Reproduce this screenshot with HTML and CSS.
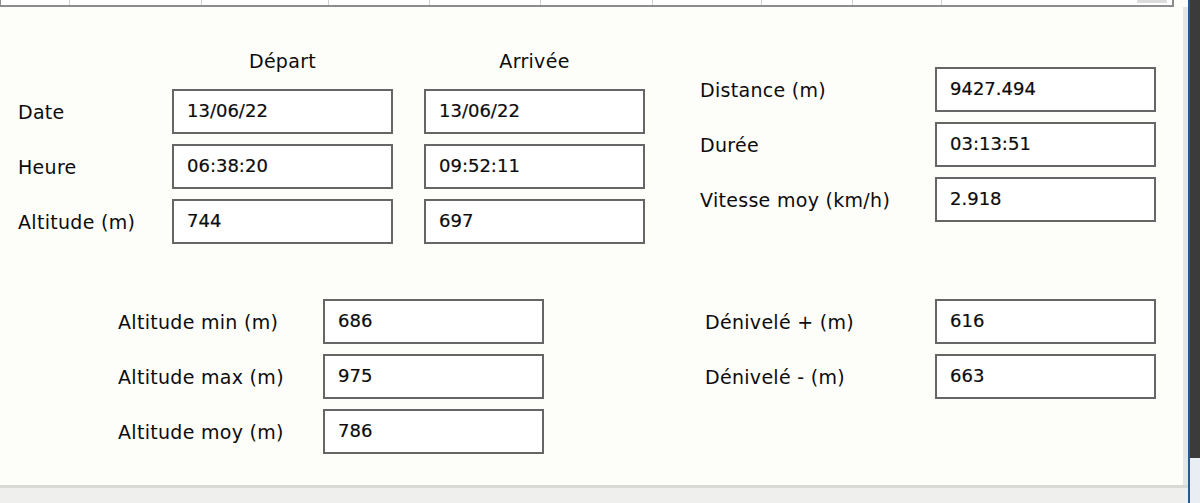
FILE: index.html
```
<!DOCTYPE html>
<html lang="fr">

<head>
    <meta charset="UTF-8">
    <title>Résumé de la trace</title>
    <link rel="stylesheet" href="styles.css">
</head>

<body>
    <div class="screen">
        <div class="window">
            <!-- Bottom edge of the points grid -->
            <div class="grid-strip">
                <div class="grid-col w69"></div>
                <div class="grid-col w132"></div>
                <div class="grid-col w127"></div>
                <div class="grid-col w101"></div>
                <div class="grid-col w111"></div>
                <div class="grid-col w112"></div>
                <div class="grid-col w109"></div>
                <div class="grid-col w91"></div>
                <div class="grid-col w89"></div>
                <div class="grid-col grid-last">
                    <div class="grid-thumb"></div>
                </div>
            </div>

            <div class="content">
                <!-- Start / end section -->
                <div class="section">
                    <div class="group group-points">
                        <span></span>
                        <div class="col-head">Départ</div>
                        <div class="col-head">Arrivée</div>

                        <label class="lbl">Date</label>
                        <div class="field">13/06/22</div>
                        <div class="field">13/06/22</div>

                        <label class="lbl">Heure</label>
                        <div class="field">06:38:20</div>
                        <div class="field">09:52:11</div>

                        <label class="lbl">Altitude (m)</label>
                        <div class="field">744</div>
                        <div class="field">697</div>
                    </div>

                    <div class="group group-totals">
                        <label class="lbl">Distance (m)</label>
                        <div class="field">9427.494</div>

                        <label class="lbl">Durée</label>
                        <div class="field">03:13:51</div>

                        <label class="lbl">Vitesse moy (km/h)</label>
                        <div class="field">2.918</div>
                    </div>
                </div>

                <!-- Altitude section -->
                <div class="section section-alt">
                    <div class="group group-alt">
                        <label class="lbl">Altitude min (m)</label>
                        <div class="field">686</div>

                        <label class="lbl">Altitude max (m)</label>
                        <div class="field">975</div>

                        <label class="lbl">Altitude moy (m)</label>
                        <div class="field">786</div>
                    </div>

                    <div class="group group-deniv">
                        <label class="lbl">Dénivelé + (m)</label>
                        <div class="field">616</div>

                        <label class="lbl">Dénivelé - (m)</label>
                        <div class="field">663</div>
                    </div>
                </div>
            </div>

            <div class="status-bar"></div>
        </div>

        <div class="side">
            <div class="side-dark"></div>
            <div class="side-light"></div>
        </div>
    </div>
</body>

</html>
```

FILE: styles.css
```
/* Base styles */
body {
    margin: 0;
    font-family: "DejaVu Sans", Verdana, sans-serif;
    color: #0c0c0c;
    background-color: #3b3b3b;
}

.screen {
    display: flex;
    width: 1200px;
    height: 503px;
    overflow: hidden;
    background-color: #3b3b3b;
}

/* Dialog window */
.window {
    flex: none;
    width: 1188px;
    display: flex;
    flex-direction: column;
    background-color: #fdfdf9;
}

/* Grid edge at the top */
.grid-strip {
    display: flex;
    height: 5px;
    border-bottom: 2px solid #8c8c8c;
    margin-right: 14px;
}

.grid-col {
    border-right: 1px solid #cfcfcf;
    background-color: #fff;
}

.grid-col:first-child {
    border-left: 1px solid #8c8c8c;
}

.w69 { width: 68px; }
.w132 { width: 131px; }
.w127 { width: 126px; }
.w101 { width: 100px; }
.w111 { width: 110px; }
.w112 { width: 111px; }
.w109 { width: 108px; }
.w91 { width: 90px; }
.w89 { width: 88px; }

.grid-last {
    flex: 1;
    display: flex;
    justify-content: flex-end;
    border-right: 2px solid #8c8c8c;
}

.grid-thumb {
    width: 30px;
    height: 3px;
    margin-right: 5px;
    background-color: #dcdcdc;
}

/* Main content */
.content {
    flex: 1;
    padding-top: 37px;
    border-right: 5px solid #e6e6e3;
}

.section {
    display: flex;
    align-items: flex-start;
}

.section-alt {
    margin-top: 55px;
}

.group {
    display: grid;
    grid-auto-rows: 45px;
    row-gap: 10px;
    align-items: center;
}

.group-points {
    margin-left: 18px;
    grid-template-columns: 123px 221px 221px;
    grid-template-rows: 35px;
    column-gap: 31px;
}

.group-totals {
    margin-left: 55px;
    margin-top: 23px;
    grid-template-columns: 235px 221px;
}

.group-alt {
    margin-left: 118px;
    grid-template-columns: 205px 221px;
}

.group-deniv {
    margin-left: 161px;
    grid-template-columns: 230px 221px;
}

/* Labels and fields */
.col-head {
    text-align: center;
    font-size: 19px;
    letter-spacing: 0.3px;
    padding-bottom: 2px;
}

.lbl {
    font-size: 19px;
    letter-spacing: 0.3px;
    white-space: nowrap;
}

.field {
    box-sizing: border-box;
    height: 45px;
    display: flex;
    align-items: center;
    padding: 0 0 3px 13px;
    border: 2px solid #666;
    background-color: #fff;
    font-size: 18px;
    -webkit-text-stroke: 0.2px #0c0c0c;
}

/* Bottom status bar */
.status-bar {
    height: 15px;
    border-top: 3px solid #d9d9d6;
    background-color: #efefed;
}

/* Window edge at the right */
.side {
    flex: 1;
    display: flex;
    flex-direction: column;
    border-left: 2px solid #1f5c9c;
}

.side-dark {
    height: 458px;
    background-color: #3b3b3b;
}

.side-light {
    flex: 1;
    background-color: #e9eef4;
}
```
